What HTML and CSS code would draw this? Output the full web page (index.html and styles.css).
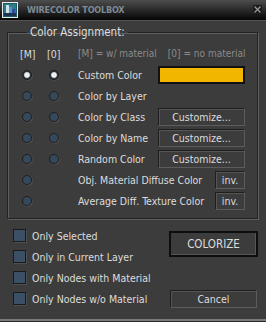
FILE: index.html
```html
<!DOCTYPE html>
<html lang="en">

<head>
  <meta charset="UTF-8" />
  <title>Wirecolor Toolbox</title>
  <link rel="stylesheet" href="styles.css">
</head>

<body>
  <div class="window">
    <div class="titlebar">
      <svg class="app-icon" width="16" height="16" viewBox="0 0 16 16">
        <rect x="0.5" y="0.5" width="15" height="15" fill="#1d5a66" stroke="#e8ecec" />
        <rect x="2" y="2" width="12" height="12" fill="#2b7c86" />
        <rect x="4" y="3" width="3" height="10" fill="#cfe3ea" />
        <rect x="7" y="5" width="3" height="8" fill="#5d8fc4" />
        <rect x="10" y="7" width="3" height="6" fill="#2e4f9a" />
        <rect x="2" y="11" width="12" height="3" fill="#1a3552" />
      </svg>
      <span class="title">WIRECOLOR TOOLBOX</span>
      <span class="close">
        <svg width="9" height="9" viewBox="0 0 9 9">
          <rect width="9" height="9" fill="#1a1a1a" />
          <path d="M1.5 1.5 L7.5 7.5 M7.5 1.5 L1.5 7.5" stroke="#9a9a9a" stroke-width="1.2" />
        </svg>
      </span>
    </div>

    <div class="content">
      <fieldset class="group">
        <legend>Color Assignment:</legend>
        <div class="grid">
          <span class="head">[M]</span>
          <span class="head">[0]</span>
          <span class="legend-note"><span>[M] = w/ material</span><span>[0] = no material</span></span>

          <span class="radio checked"></span>
          <span class="radio checked"></span>
          <span class="label">Custom Color</span>
          <span class="swatch"></span>

          <span class="radio"></span>
          <span class="radio"></span>
          <span class="label">Color by Layer</span>
          <span></span>

          <span class="radio"></span>
          <span class="radio"></span>
          <span class="label">Color by Class</span>
          <button class="btn">Customize...</button>

          <span class="radio"></span>
          <span class="radio"></span>
          <span class="label">Color by Name</span>
          <button class="btn">Customize...</button>

          <span class="radio"></span>
          <span class="radio"></span>
          <span class="label">Random Color</span>
          <button class="btn">Customize...</button>

          <span class="radio"></span>
          <span></span>
          <span class="label">Obj. Material Diffuse Color</span>
          <button class="btn small">inv.</button>

          <span class="radio"></span>
          <span></span>
          <span class="label">Average Diff. Texture Color</span>
          <button class="btn small">inv.</button>
        </div>
      </fieldset>

      <div class="options">
        <label class="check"><span class="box"></span>Only Selected</label>
        <button class="btn colorize">COLORIZE</button>
        <label class="check"><span class="box"></span>Only in Current Layer</label>
        <label class="check"><span class="box"></span>Only Nodes with Material</label>
        <label class="check"><span class="box"></span>Only Nodes w/o Material</label>
        <button class="btn cancel">Cancel</button>
      </div>
    </div>
  </div>
</body>

</html>
```

FILE: styles.css
```css
body {
  margin: 0;
  background: #3c3c3c;
  font-family: "DejaVu Sans Condensed", "DejaVu Sans", sans-serif;
  font-size: 10.5px;
  color: #dcdcdc;
}

.window {
  width: 266px;
  height: 322px;
  box-sizing: border-box;
  background: #3c3c3c;
  border-bottom: 1px solid #2a2a2a;
  box-shadow: inset 0 -2px 0 #7a7a7a;
  display: flex;
  flex-direction: column;
}

.titlebar {
  height: 20px;
  display: flex;
  align-items: center;
  padding: 0 4px 0 2px;
  background: linear-gradient(#4d4d4d, #050505);
  border-bottom: 1px solid #555;
}

.app-icon {
  flex: none;
}

.title {
  margin-left: 9px;
  font-weight: bold;
  font-size: 9px;
  letter-spacing: -0.2px;
  color: #7e8b95;
  flex: 1;
}

.close {
  display: flex;
  margin-top: -1px;
}

.content {
  padding: 4px 8px 0 7px;
}

.group {
  margin: 0;
  padding: 4px 0 7px 14px;
  border: 1px solid #232323;
  box-shadow: 1px 1px 0 #5e5e5e, inset 1px 1px 0 #5e5e5e;
  min-width: 0;
}

.group legend {
  margin-left: 5px;
  padding: 0 3px;
  line-height: 14px;
  font-size: 11.5px;
}

.grid {
  display: grid;
  grid-template-columns: 27px 29px 80px 87px;
  grid-auto-rows: 21px;
  align-items: center;
}

.head {
  margin-left: -2px;
}

.legend-note {
  grid-column: span 2;
  display: flex;
  gap: 11px;
  white-space: nowrap;
  font-size: 10px;
  color: #8a8a8a;
}

.radio {
  width: 10px;
  height: 10px;
  box-sizing: border-box;
  border-radius: 50%;
  background: #34495c;
  border: 1px solid #1e1e1e;
  box-shadow: 1px 1px 0 #4a4a4a;
}

.radio.checked {
  background: radial-gradient(circle, #f0f0f0 0 2px, #cfcfcf 2.5px, #2c3a46 3.5px);
}

.label {
  white-space: nowrap;
}

.swatch {
  height: 18px;
  box-sizing: border-box;
  background: #f0b600;
  border: 2px solid #111;
  margin-top: 1px;
}

.btn {
  font-family: inherit;
  font-size: 10.5px;
  color: #dcdcdc;
  background: #3c3c3c;
  height: 18px;
  padding: 0;
  border: 1px solid;
  border-color: #1e1e1e #5c5c5c #5c5c5c #1e1e1e;
  box-shadow: inset 1px 1px 0 #555;
}

.btn.small {
  width: 30px;
  justify-self: end;
}

.options {
  display: grid;
  grid-template-columns: 1fr 89px;
  grid-auto-rows: 21px;
  align-items: center;
  padding: 6px 0 0 6px;
}

.check {
  grid-column: 1;
  display: flex;
  align-items: center;
  gap: 6px;
  white-space: nowrap;
}

.box {
  width: 13px;
  height: 13px;
  box-sizing: border-box;
  background: #3b5066;
  border: 1px solid #1a1a1a;
  box-shadow: 1px 1px 0 #4f4f4f;
}

.colorize {
  grid-column: 2;
  grid-row: 1 / span 2;
  align-self: start;
  margin-top: 6px;
  height: 26px;
  border: 2px solid #0e0e0e;
  box-shadow: inset -1px -1px 0 #555;
  font-size: 11.5px;
}

.cancel {
  grid-column: 2;
  grid-row: 4;
  margin-left: 1px;
  width: 87px;
}
```
